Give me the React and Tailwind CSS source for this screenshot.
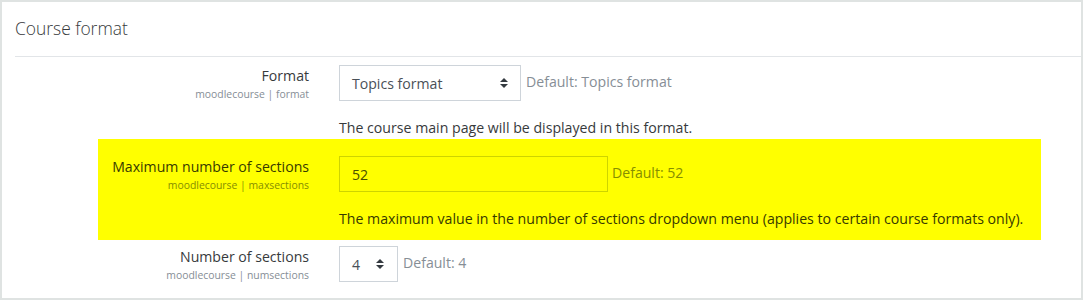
import React from "react";

const Arrows = () => (
  <svg width="8" height="10" viewBox="0 0 4 5" className="shrink-0">
    <path d="M2 0L0 2h4zm0 5L0 3h4z" fill="#343a40" />
  </svg>
);

function Row({ label, sub, children, desc, hl }) {
  return (
    <div className={"flex w-[943px] ml-[96px] " + (hl ? "bg-[#ffff00] pt-[17px] pb-[10px]" : "")}>
      <div className="w-[226px] pr-[15px] flex flex-col items-end shrink-0">
        <div className={"text-[14.1px] leading-[22px] " + (hl ? "text-[#373a00]" : "text-[#373a3c]")}>{label}</div>
        <div className={"text-[10.4px] leading-[14px] " + (hl ? "text-[#868e00]" : "text-[#868e96]")}>{sub}</div>
      </div>
      <div className="pl-[15px] flex flex-col">
        <div className="flex items-center">{children}</div>
        {desc && (
          <div className={"mt-[16px] text-[14.15px] leading-[22px] " + (hl ? "text-[#373a00]" : "text-[#373a3c]")}>{desc}</div>
        )}
      </div>
    </div>
  );
}

export default function App() {
  return (
    <div className="w-[1083px] h-[300px] bg-[#dfe3e2] p-[2px] box-border" style={{ fontFamily: '"Open Sans", "Noto Sans", sans-serif' }}>
      <div className="bg-white h-full overflow-hidden">
        <div className="ml-[13px] h-[55px] border-b border-[#e2e5e8] flex items-center">
          <span className="text-[17.4px] font-light text-[#373a3c] pb-[1px]">Course format</span>
        </div>
        <div className="mt-[8px]">
          <Row label="Format" sub="moodlecourse | format" desc="The course main page will be displayed in this format.">
            <div className="w-[182px] h-[36px] border border-[#ced4da] flex items-center justify-between pl-[12px] pr-[12px] text-[14.1px] text-[#495057]">
              <span className="pt-[2px]">Topics format</span>
              <Arrows />
            </div>
            <span className="ml-[5px] text-[14.1px] text-[#868e96] -mt-[3px]">Default: Topics format</span>
          </Row>
        </div>
        <Row hl label="Maximum number of sections" sub="moodlecourse | maxsections" desc="The maximum value in the number of sections dropdown menu (applies to certain course formats only).">
          <div className="w-[269px] h-[36px] border border-[#ced400] flex items-center pl-[12px] text-[14.1px] text-[#495000]">
            <span className="pt-[2px]">52</span>
          </div>
          <span className="ml-[4px] text-[14.1px] text-[#868e00] -mt-[3px]">Default: 52</span>
        </Row>
        <div className="mt-[6px]">
          <Row label="Number of sections" sub="moodlecourse | numsections">
            <div className="w-[59px] h-[36px] border border-[#ced4da] flex items-center justify-between pl-[12px] pr-[13px] text-[14.1px] text-[#495057]">
              <span className="pt-[2px]">4</span>
              <Arrows />
            </div>
            <span className="ml-[5px] text-[14.1px] text-[#868e96] -mt-[3px]">Default: 4</span>
          </Row>
        </div>
      </div>
    </div>
  );
}
